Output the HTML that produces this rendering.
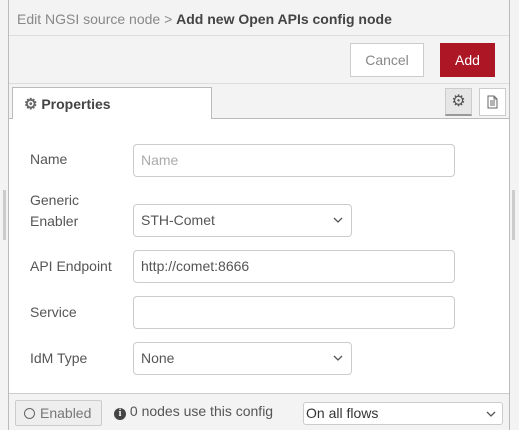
<!DOCTYPE html>
<html><head><style>
*{box-sizing:border-box;margin:0;padding:0}
body{width:519px;height:430px;overflow:hidden;background:#f3f3f3;font-family:"Liberation Sans",sans-serif;font-size:14px;color:#555;position:relative}
.a{position:absolute}
.dlg{left:8px;top:0;width:502px;height:430px;border-left:1px solid #bbb;border-right:1px solid #bbb;background:#f3f3f3}
.inp{position:absolute;border:1px solid #ccc;border-radius:4px;background:#fff;height:33px;padding-left:7px;line-height:31px;font-size:14px;color:#555}
.lbl{position:absolute;left:21px;font-size:14px;color:#555}
.chev{position:absolute;right:8px;top:12px}
</style></head><body>
<div class="a" style="left:3px;top:190px;width:3px;height:50px;background:#ccc"></div>
<div class="a" style="left:512px;top:190px;width:3px;height:50px;background:#ccc"></div>
<div class="a dlg">
<div class="a" style="left:0;top:0;width:500px;height:36px;border-bottom:1px solid #ddd;padding:11px 0 0 8px;font-size:14px;color:#888">Edit NGSI source node &gt; <b style="color:#444">Add new Open APIs config node</b></div>
<div class="a" style="left:341px;top:43px;width:74px;height:34px;border:1px solid #ccc;background:#fff;color:#888;text-align:center;line-height:32px">Cancel</div>
<div class="a" style="left:431px;top:43px;width:55px;height:34px;background:#ad1625;color:#fff;text-align:center;line-height:34px">Add</div>
<div class="a" style="left:0;top:83px;width:500px;height:1px;background:#ddd"></div>
<div class="a" style="left:0;top:118px;width:500px;height:275px;background:#fff;border-top:1px solid #bbb"></div>
<div class="a" style="left:3px;top:87px;width:200px;height:32px;background:#fff;border:1px solid #bbb;border-bottom:none;padding:7px 0 0 11px;font-weight:bold;color:#444;font-size:14px"><span style="color:#666;font-size:15px">⚙</span> Properties</div>
<div class="a" style="left:436px;top:88px;width:27px;height:28px;background:#e6e6e6;border:1px solid #ccc;border-bottom:2px solid #999;text-align:center;line-height:26px;color:#555;font-size:16px">⚙</div>
<div class="a" style="left:470px;top:88px;width:27px;height:28px;background:#fff;border:1px solid #ccc;">
<svg width="25" height="26" viewBox="0 0 25 26"><path d="M8 7h6l3 3v9H8z M14 7v3h3 M10 12h5 M10 14h5 M10 16h5" fill="none" stroke="#666" stroke-width="1"/></svg></div>

<div class="lbl" style="top:151px">Name</div>
<div class="inp" style="left:124px;top:144px;width:322px;color:#aaa">Name</div>
<div class="lbl" style="top:190px;line-height:21px">Generic<br>Enabler</div>
<div class="inp" style="left:124px;top:204px;width:219px">STH-Comet<svg class="chev" width="10" height="7"><path d="M1 1l4 4 4-4" fill="none" stroke="#555" stroke-width="1.3"/></svg></div>
<div class="lbl" style="top:258px">API Endpoint</div>
<div class="inp" style="left:124px;top:250px;width:322px">http://comet:8666</div>
<div class="lbl" style="top:304px">Service</div>
<div class="inp" style="left:124px;top:296px;width:322px"></div>
<div class="lbl" style="top:350px">IdM Type</div>
<div class="inp" style="left:124px;top:342px;width:219px">None<svg class="chev" width="10" height="7"><path d="M1 1l4 4 4-4" fill="none" stroke="#555" stroke-width="1.3"/></svg></div>

<div class="a" style="left:0;top:393px;width:500px;height:1px;background:#ccc"></div>
<div class="a" style="left:6px;top:400px;width:87px;height:26px;border:1px solid #ccc;background:#eee;border-radius:2px;line-height:24px;padding-left:8px;color:#777"><span style="display:inline-block;width:11px;height:11px;border:1px solid #666;border-radius:50%;vertical-align:-1px;margin-right:5px"></span>Enabled</div>
<div class="a" style="left:105px;top:403px;color:#555"><span style="display:inline-block;width:12px;height:12px;border-radius:50%;background:#444;color:#fff;font-size:10px;font-weight:bold;text-align:center;line-height:12px;font-family:'Liberation Serif',serif;vertical-align:0">i</span> 0 nodes use this config</div>
<div class="a" style="left:294px;top:402px;width:200px;height:23px;border:1px solid #ccc;border-radius:3px;background:#fff;line-height:21px;padding-left:2px;color:#333">On all flows<svg style="position:absolute;right:6px;top:8px" width="10" height="7"><path d="M1 1l4 4 4-4" fill="none" stroke="#555" stroke-width="1.3"/></svg></div>
</div>
</body></html>
